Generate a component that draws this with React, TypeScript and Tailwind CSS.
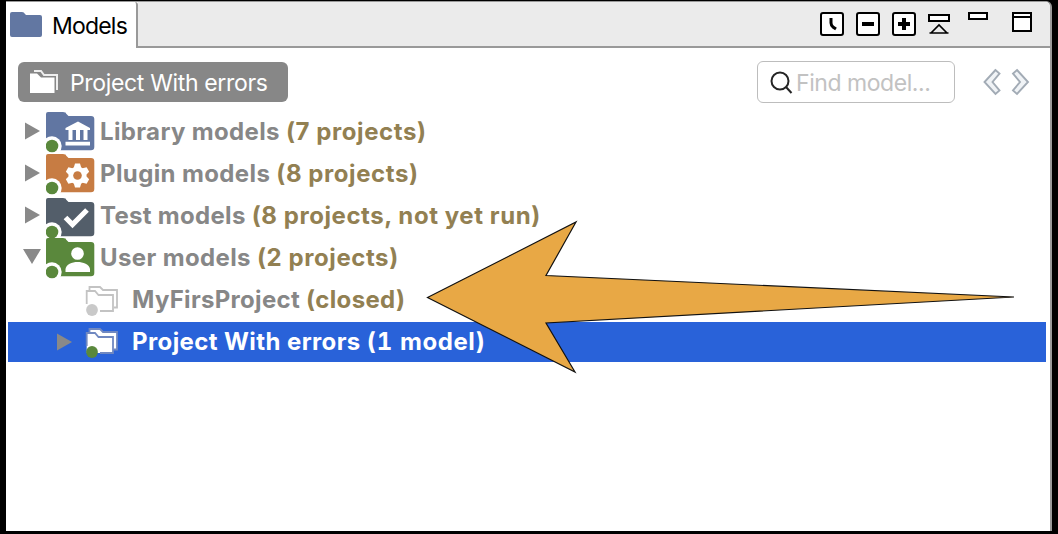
import type { ReactNode } from "react";

function Dot({ color = "#5a883c" }: { color?: string }) {
  return (
    <>
      <circle cx="6" cy="34" r="9.700" fill="#fff" />
      <circle cx="6" cy="34" r="6.300" fill={color} />
    </>
  );
}

function BigFolder({ color, children }: { color: string; children: ReactNode }) {
  return (
    <svg width="50" height="42" viewBox="0 0 50 42" className="block shrink-0">
      <path d="M0 2Q0 0 2 0H17Q20 0 20 1.500L22.500 4H45Q48.300 4 48.300 7V35Q48.300 38.200 45 38.200H0Z" fill={color} />
      {children}
      <Dot />
    </svg>
  );
}

function Library() {
  return (
    <BigFolder color="#6176a2">
      <path d="M32 9.500L44 16V18H19.500V16ZM22.500 18H26.500V28H22.500ZM30 18H34V28H30ZM37.500 18H41.500V28H37.500ZM19.500 29.700H44V33.500H19.500Z" fill="#fff" />
    </BigFolder>
  );
}

function Plugin() {
  return (
    <BigFolder color="#c77c43">
      <g transform="translate(31.500 21.500)" fill="#fff">
        <circle r="9" />
        {[0, 60, 120].map((a) => (
          <path key={a} transform={`rotate(${a})`} d="M-2.500 -12H2.500L4 -7V7L2.500 12H-2.500L-4 7V-7Z" />
        ))}
        <circle r="4.300" fill="#c77c43" />
      </g>
    </BigFolder>
  );
}

function Test() {
  return (
    <BigFolder color="#535e6a">
      <path d="M19.500 19.500L26.500 26.500L41 12" fill="none" stroke="#fff" strokeWidth="5.200" />
    </BigFolder>
  );
}

function User() {
  return (
    <BigFolder color="#5a883c">
      <circle cx="31.500" cy="15.500" r="6.300" fill="#fff" />
      <path d="M19.500 34V31C20 26.500 26 24 31.500 24S43.500 26.500 44 31V34Z" fill="#fff" />
    </BigFolder>
  );
}

function Arrow({ down = false }: { down?: boolean }) {
  return (
    <svg width="20" height="20" viewBox="0 0 20 20" className="block shrink-0">
      <path d={down ? "M0 2H18L9 17Z" : "M2 1.500L17 10L2 18.500Z"} fill="#898989" />
    </svg>
  );
}

function SmallFolder({ open }: { open: boolean }) {
  const line = open ? "#7088c0" : "#c3c3c3";
  return (
    <svg width="34" height="34" viewBox="0 -1 34 34" className="block shrink-0">
      {open && <path d="M4.500 7V4H15L18 7H32V24.500H28V28H1.700V8H4.500Z" fill="#fff" />}
      <path d="M4.500 7V4H15L18 7H32V24.500H29" fill="none" stroke={line} strokeWidth="1.800" />
      <path d="M1.700 21V8H10L13.500 12H28V28H15" fill="none" stroke={line} strokeWidth="1.800" />
      <circle cx="7" cy="27" r="5.900" fill={open ? "#5a883c" : "#c9c9c9"} />
    </svg>
  );
}

function Row({ icon, down, name, count, nameTracking }: {
  icon: ReactNode; down?: boolean; name: string; count: string; nameTracking: string;
}) {
  return (
    <div className="flex h-[42px] items-center pl-[17px]">
      <Arrow down={down} />
      <div className="ml-[3px] mt-1">{icon}</div>
      <div className="ml-1 mt-[2px] flex whitespace-pre text-[24px] font-bold leading-[30px]">
        <span className={`text-[#878787] ${nameTracking}`}>{name}</span>
        <span className="tracking-[0.57px] text-[#928052]">{count}</span>
      </div>
    </div>
  );
}

function Toolbar() {
  return (
    <svg width="216" height="28" viewBox="818 9 216 28" className="mt-[7px] block shrink-0" fill="none" stroke="#000" strokeWidth="2">
      <rect x="821" y="13" width="22" height="22" rx="2" fill="#fff" />
      <path d="M831 18V23Q831 25 833 27L836 29" strokeWidth="3" />
      <rect x="857" y="13" width="22" height="22" rx="2" fill="#fff" />
      <path d="M862 24H874" strokeWidth="4" />
      <rect x="893" y="13" width="22" height="22" rx="2" fill="#fff" />
      <path d="M898 24H910M904 18V30" strokeWidth="4" />
      <path d="M929 15H949V21H929Z" fill="#fff" />
      <path d="M929.500 33H948.500M931 33L939 25L947 33" strokeWidth="1.700" />
      <path d="M969 13H987V19H969Z" fill="#fff" />
      <path d="M1013 13H1031V31H1013ZM1013 17H1031" fill="#fff" />
    </svg>
  );
}

export default function App() {
  return (
    <div className="relative h-[534px] w-[1058px] overflow-hidden bg-black pl-[6px] pt-px font-['Inter','Liberation_Sans',sans-serif]">
      <div className="h-[530px] w-[1046px] rounded-tr-[6px] border-r-2 border-t border-[#999] bg-white">
        <header className="flex h-[46px]">
          <div className="flex h-[46px] w-[132px] shrink-0 items-center rounded-tr-[3px] border-r-2 border-[#999] bg-white pl-1">
            <svg width="34" height="28" viewBox="0 0 34 28" className="block shrink-0">
              <path d="M0 3Q0 1 2 1H12Q14 1 15 3L16 4H30Q32 4 32 6V24Q32 26 30 26H2Q0 26 0 24Z" fill="#6277a2" />
            </svg>
            <span className="ml-[8px] mt-[2px] whitespace-nowrap text-[23px] leading-7 tracking-[-0.8px]">Models</span>
          </div>
          <div className="flex grow justify-end rounded-tr-[5px] border-b-2 border-[#999] bg-[#ebebeb] pr-4">
            <Toolbar />
          </div>
        </header>
        <div className="flex h-[62px] items-start pl-3 pt-[14px]">
          <div className="flex h-10 w-[270px] shrink-0 items-center rounded-[6px] bg-[#878787] pl-[11px] text-white">
            <svg width="32" height="28" viewBox="0 0 32 28" className="block shrink-0">
              <path d="M5 3H12L15 7H28V22" fill="none" stroke="#eee" strokeWidth="2" />
              <path d="M1 5.500H8L12 9.500H25.500V25H1Z" fill="#fff" />
            </svg>
            <span className="ml-[9px] mt-px whitespace-nowrap text-[23px] leading-7 tracking-[-0.34px]">Project With errors</span>
          </div>
          <div className="-mt-px ml-auto mr-[27px] flex h-[42px] w-[198px] shrink-0 items-center rounded-[6px] border border-[#bdbdbd] bg-white pl-3">
            <svg width="24" height="24" viewBox="0 0 24 24" className="mt-px block shrink-0" fill="none" stroke="#252525" strokeWidth="2">
              <circle cx="10" cy="10" r="8.500" />
              <path d="M16 16L21.500 22" />
            </svg>
            <span className="ml-[2px] mt-px whitespace-nowrap text-[23px] leading-7 tracking-[-0.45px] text-[#c2c2c2]">Find model...</span>
          </div>
          <svg width="50" height="28" viewBox="0 0 50 28" className="mr-[18px] mt-[6px] block shrink-0" fill="#f0f3f6" stroke="#a2abb5" strokeWidth="1.900">
            <path d="M13.500 2L2.500 14L13.500 26L17.500 22.500L10.500 14L17.500 5.500Z" />
            <path d="M35 2L46 14L35 26L31 22.500L38 14L31 5.500Z" />
          </svg>
        </div>
        <main>
          <Row icon={<Library />} name="Library models " count="(7 projects)" nameTracking="tracking-[0.36px]" />
          <Row icon={<Plugin />} name="Plugin models " count="(8 projects)" nameTracking="tracking-[0.38px]" />
          <Row icon={<div className="mt-1"><Test /></div>} name="Test models " count="(8 projects, not yet run)" nameTracking="tracking-[0.3px]" />
          <Row icon={<User />} down name="User models " count="(2 projects)" nameTracking="tracking-[0.38px]" />
          <div className="flex h-[42px] items-center pl-[79px]">
            <SmallFolder open={false} />
            <div className="ml-[13px] mt-[2px] flex whitespace-pre text-[24px] font-bold leading-[30px]">
              <span className="tracking-[0.3px] text-[#878787]">MyFirsProject </span>
              <span className="tracking-[0.35px] text-[#928052]">(closed)</span>
            </div>
          </div>
          <div className="ml-[2px] mr-[4px] mt-[2px] flex h-10 items-center bg-[#2962d9] pl-[47px]">
            <Arrow />
            <div className="-mt-[2px] ml-[10px]">
              <SmallFolder open />
            </div>
            <div className="ml-[13px] flex whitespace-pre text-[24px] font-bold leading-[30px] text-white">
              <span className="tracking-[0.4px]">Project With errors </span>
              <span className="tabular-nums tracking-[0.6px]">(1 model)</span>
            </div>
          </div>
        </main>
      </div>
      <svg width="590" height="154" viewBox="426 220 590 154" className="absolute left-[426px] top-[220px]">
        <path d="M427.500 297.500L576 222L546 275.500L1014 297L546 323L575 372Z" fill="#e8a845" stroke="#111" strokeWidth="1.200" />
      </svg>
    </div>
  );
}
